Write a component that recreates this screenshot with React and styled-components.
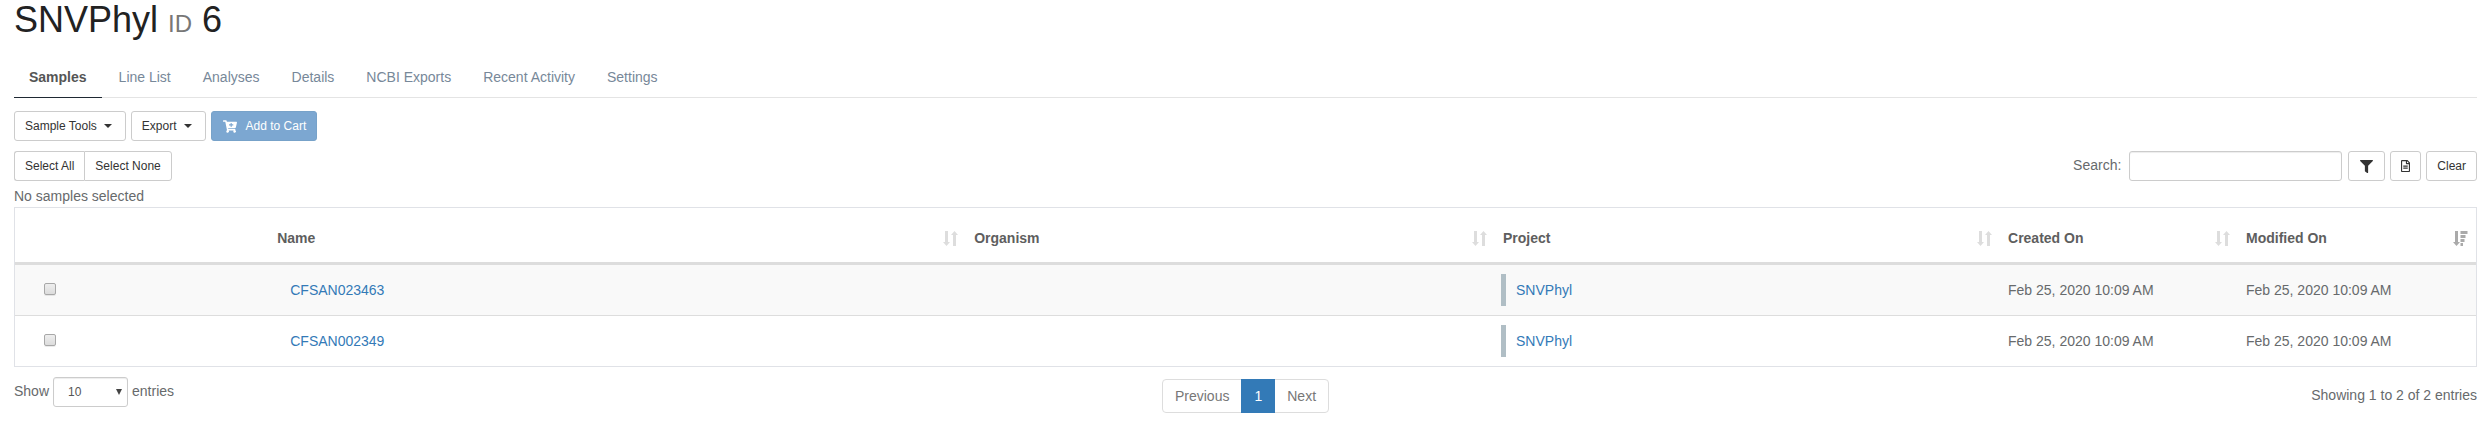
import React from 'react';
import styled, { createGlobalStyle, css } from 'styled-components';
import { FaFilter, FaCartPlus, FaRegFileAlt } from 'react-icons/fa';

const GlobalStyle = createGlobalStyle`
  *, *::before, *::after { box-sizing: border-box; }
  body {
    margin: 0;
    background: #fff;
    color: #676a6c;
    font: 14px/20px "Liberation Sans", Arial, sans-serif;
  }
  a { text-decoration: none; }
`;

const Page = styled.main`
  padding: 0 14px 28px;
`;

const Title = styled.h1`
  margin: 0 0 17px;
  color: #222;
  font-size: 36px;
  font-weight: 400;
  line-height: 40px;
`;

const TitleTag = styled.small`
  color: #777;
  font-size: 24px;
  line-height: 24px;
`;

const Tabs = styled.nav`
  display: flex;
  gap: 2px;
  height: 41px;
  border-bottom: 1px solid #e4e4e4;
`;

const Tab = styled.a`
  height: 41px;
  padding: 10px 15px;
  color: #778899;
  ${({ $active }) => $active && css`
    border-bottom: 1px solid #1f2933;
    color: #555;
    font-weight: 700;
  `}
`;

const Toolbar = styled.div`
  display: flex;
  gap: 5px;
  padding: 13px 0 10px;
`;

const Button = styled.button`
  display: inline-flex;
  align-items: center;
  justify-content: center;
  height: 30px;
  padding: 0 10px;
  border: 1px solid ${({ $primary }) => ($primary ? '#77a2c9' : '#ccc')};
  border-radius: 3px;
  background: ${({ $primary }) => ($primary ? '#7ca7d1' : '#fff')};
  color: ${({ $primary }) => ($primary ? '#fff' : '#333')};
  font: 12px/18px "Liberation Sans", Arial, sans-serif;
  white-space: nowrap;
`;

const Caret = styled.span`
  margin: 0 3px 0 7px;
  border-top: 4px solid currentColor;
  border-right: 4px solid transparent;
  border-left: 4px solid transparent;
`;

const CartIcon = styled(FaCartPlus)`
  width: 14px;
  height: 13px;
  margin: 0 9px 0 1px;
`;

const FilterIcon = styled(FaFilter)`
  width: 13px;
  height: 13px;
  margin: 0 1px;
`;

const FileIcon = styled(FaRegFileAlt)`
  width: 9px;
  height: 12px;
`;

const Controls = styled.div`
  display: flex;
  justify-content: space-between;
`;

const ButtonGroup = styled.div`
  display: flex;
  ${Button}:first-child { border-right: 0; border-radius: 3px 0 0 3px; }
  ${Button}:last-child { border-radius: 0 3px 3px 0; }
`;

const SearchArea = styled.form`
  display: flex;
  gap: 5px;
`;

const SearchLabel = styled.label`
  margin-right: 1px;
  line-height: 28px;
`;

const SearchInput = styled.input`
  width: 213px;
  height: 30px;
  margin-left: 8px;
  padding: 5px 10px;
  border: 1px solid #ccc;
  border-radius: 3px;
  box-shadow: inset 0 1px 1px rgba(0, 0, 0, 0.075);
  font: inherit;
  vertical-align: top;
`;

const Status = styled.p`
  margin: 5px 0 1px;
`;

const Table = styled.table`
  width: 100%;
  border: 1px solid #e0e2e7;
  border-spacing: 0;
  table-layout: fixed;
`;

const Col = styled.col`
  width: ${({ $share }) => $share}%;
`;

const HeadCell = styled.th`
  height: 57px;
  padding: 5px 8px 0;
  border-bottom: 3px solid #ddd;
  color: #5e5e5e;
  font-weight: 700;
  text-align: left;
`;

const HeadContent = styled.div`
  display: flex;
  align-items: center;
  justify-content: space-between;
`;

const SortSvg = styled.svg`
  width: 15px;
  height: 15px;
  margin: 2px 0 0;
  color: ${({ $active }) => ($active ? '#aaa' : '#ddd')};
`;

const Row = styled.tr`
  background: ${({ $striped }) => ($striped ? '#f9f9f9' : '#fff')};
`;

const Cell = styled.td`
  height: 50px;
  padding: 0 8px;
  tr + tr > & {
    height: 51px;
    border-top: 1px solid #ddd;
  }
`;

const Checkbox = styled.input`
  appearance: none;
  display: block;
  width: 12px;
  height: 12px;
  margin: 0 0 2px 21px;
  border: 1px solid #a8a8a8;
  border-radius: 2px;
  background: linear-gradient(#eee, #dcdcdc);
  box-shadow: 0 1px 0 rgba(0, 0, 0, 0.08);
  &:checked { background: #337ab7; }
`;

const Link = styled.a`
  color: #337ab7;
`;

const NameLink = styled(Link)`
  padding-left: 13px;
`;

const ProjectLink = styled(Link)`
  display: block;
  margin-left: -2px;
  padding: 6px 10px;
  border-left: 5px solid #b0bec5;
`;

const Footer = styled.footer`
  display: grid;
  grid-template-columns: 1fr auto 1fr;
  align-items: start;
  padding-top: 10px;
`;

const Length = styled.label`
  display: flex;
  gap: 4px;
  line-height: 28px;
`;

const SelectBox = styled.span`
  position: relative;
  &::after {
    content: '';
    position: absolute;
    top: 12px;
    right: 6px;
    border-top: 6px solid #444;
    border-right: 3px solid transparent;
    border-left: 3px solid transparent;
    pointer-events: none;
  }
`;

const Select = styled.select`
  appearance: none;
  display: block;
  width: 75px;
  height: 30px;
  padding: 0 14px;
  border: 1px solid #ccc;
  border-radius: 3px;
  background: #fff;
  box-shadow: inset 0 1px 1px rgba(0, 0, 0, 0.075);
  color: #555;
  font: 12px/18px "Liberation Sans", Arial, sans-serif;
`;

const Pagination = styled.nav`
  display: flex;
  margin-top: 2px;
`;

const PageButton = styled.button`
  position: relative;
  z-index: ${({ $active }) => ($active ? 1 : 0)};
  height: 34px;
  padding: 0 12px;
  border: 1px solid ${({ $active }) => ($active ? '#337ab7' : '#ddd')};
  background: ${({ $active }) => ($active ? '#337ab7' : '#fff')};
  color: ${({ $active }) => ($active ? '#fff' : '#777')};
  font: inherit;
  button + & { margin-left: -1px; }
  &:first-child { border-radius: 4px 0 0 4px; }
  &:last-child { border-radius: 0 4px 4px 0; }
`;

const Info = styled.div`
  padding-top: 8px;
  text-align: right;
`;

function SortIcon({ active }) {
  return (
    <SortSvg $active={active} viewBox="0 0 15 15" fill="currentColor" aria-hidden="true">
      <path d="M2 0h3v11h2L3.5 15 0 11h2z" />
      {active ? (
        <path d="M7.500 0h7v3h-7zM7.500 4h5v3h-5zM7.500 8h4v3h-4zM7.500 12h2.500v3h-2.500z" />
      ) : (
        <path d="M10 15h3V4h2L11.500 0 8 4h2z" />
      )}
    </SortSvg>
  );
}

const tabs = ['Samples', 'Line List', 'Analyses', 'Details', 'NCBI Exports', 'Recent Activity', 'Settings'];
const columns = ['Name', 'Organism', 'Project', 'Created On', 'Modified On'];
const shares = [10.33, 28.32, 21.49, 20.52, 9.67, 9.67];
const date = 'Feb 25, 2020 10:09 AM';
const samples = ['CFSAN023463', 'CFSAN002349'];

export default function App() {
  return (
    <>
      <GlobalStyle />
      <Page>
        <Title>SNVPhyl <TitleTag>ID</TitleTag> 6</Title>
        <Tabs>
          {tabs.map((tab, i) => (
            <Tab key={tab} href="#" $active={i === 0}>{tab}</Tab>
          ))}
        </Tabs>
        <Toolbar>
          <Button type="button">Sample Tools<Caret /></Button>
          <Button type="button">Export<Caret /></Button>
          <Button type="button" $primary><CartIcon />Add to Cart</Button>
        </Toolbar>
        <Controls>
          <ButtonGroup>
            <Button type="button">Select All</Button>
            <Button type="button">Select None</Button>
          </ButtonGroup>
          <SearchArea>
            <SearchLabel>Search:<SearchInput type="search" /></SearchLabel>
            <Button type="button" aria-label="Filter"><FilterIcon /></Button>
            <Button type="button" aria-label="Filter by file"><FileIcon /></Button>
            <Button type="reset">Clear</Button>
          </SearchArea>
        </Controls>
        <Status>No samples selected</Status>
        <Table>
          <colgroup>
            {shares.map((share, i) => <Col key={i} $share={share} />)}
          </colgroup>
          <thead>
            <tr>
              <HeadCell />
              {columns.map((name) => (
                <HeadCell key={name} scope="col">
                  <HeadContent>{name}<SortIcon active={name === 'Modified On'} /></HeadContent>
                </HeadCell>
              ))}
            </tr>
          </thead>
          <tbody>
            {samples.map((sample, i) => (
              <Row key={sample} $striped={i === 0}>
                <Cell><Checkbox type="checkbox" aria-label={sample} /></Cell>
                <Cell><NameLink href="#">{sample}</NameLink></Cell>
                <Cell />
                <Cell><ProjectLink href="#">SNVPhyl</ProjectLink></Cell>
                <Cell>{date}</Cell>
                <Cell>{date}</Cell>
              </Row>
            ))}
          </tbody>
        </Table>
        <Footer>
          <Length>
            Show
            <SelectBox>
              <Select defaultValue="10">
                <option>10</option>
                <option>25</option>
                <option>50</option>
                <option>100</option>
              </Select>
            </SelectBox>
            entries
          </Length>
          <Pagination>
            <PageButton type="button">Previous</PageButton>
            <PageButton type="button" $active>1</PageButton>
            <PageButton type="button">Next</PageButton>
          </Pagination>
          <Info>Showing 1 to 2 of 2 entries</Info>
        </Footer>
      </Page>
    </>
  );
}
